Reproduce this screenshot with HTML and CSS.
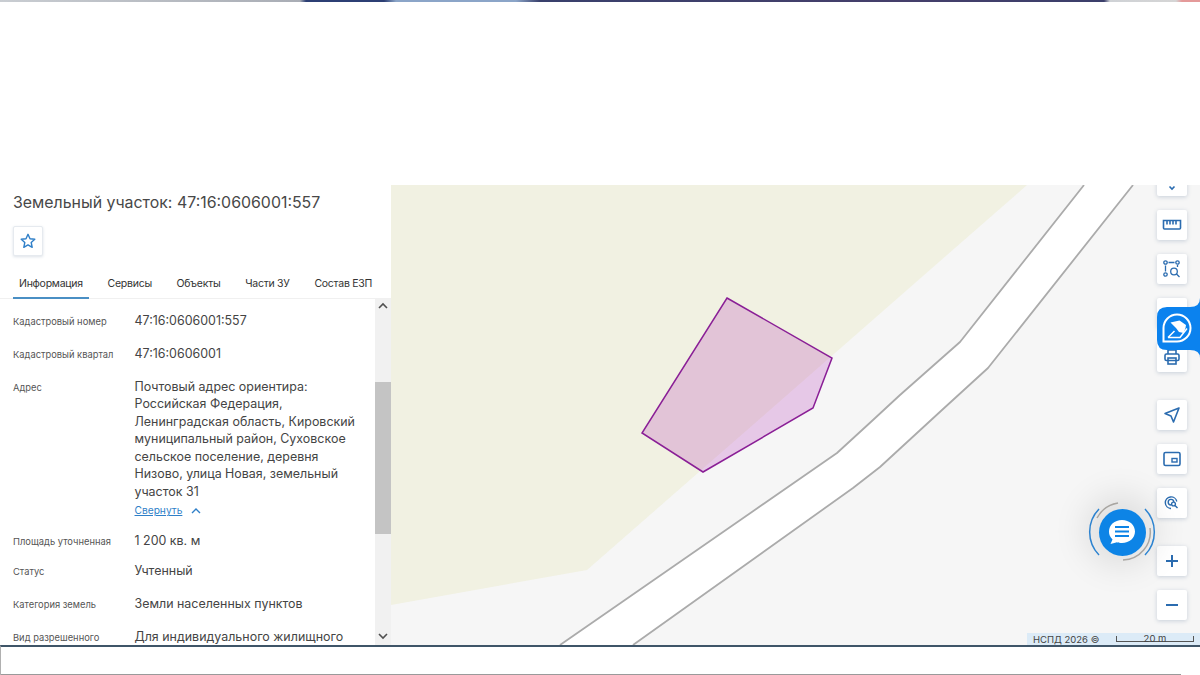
FILE: index.html
```html
<!DOCTYPE html>
<html lang="ru">
<head>
    <meta charset="UTF-8">
    <title>Земельный участок: 47:16:0606001:557</title>
    <link rel="stylesheet" href="styles.css">
</head>
<body>
    <div class="top-strip"></div>
    <div class="top-space"></div>

    <main class="workspace">
        <aside class="panel">
            <h1 class="panel-title">Земельный участок: 47:16:0606001:557</h1>
            <button class="star-button">
                <svg width="16" height="16" viewBox="0 0 16 16"><path d="M8 1.300l2 4.500 4.800.5-3.600 3.200 1 4.800L8 11.900l-4.200 2.400 1-4.800L1.200 6.300 6 5.800z" fill="none" stroke="#2f7fc8" stroke-width="1.400" stroke-linejoin="round"/></svg>
            </button>
            <nav class="tabs">
                <a class="tab tab-active">Информация</a>
                <a class="tab">Сервисы</a>
                <a class="tab">Объекты</a>
                <a class="tab">Части ЗУ</a>
                <a class="tab">Состав ЕЗП</a>
            </nav>
            <div class="panel-body">
                <div class="info-list">
                    <div class="info-row">
                        <div class="info-label">Кадастровый номер</div>
                        <div class="info-value">47:16:0606001:557</div>
                    </div>
                    <div class="info-row">
                        <div class="info-label">Кадастровый квартал</div>
                        <div class="info-value">47:16:0606001</div>
                    </div>
                    <div class="info-row info-row-address">
                        <div class="info-label">Адрес</div>
                        <div class="info-value">
                            Почтовый адрес ориентира:<br>Российская Федерация,<br>Ленинградская область, Кировский<br>муниципальный район, Суховское<br>сельское поселение, деревня<br>Низово, улица Новая, земельный<br>участок 31
                            <a class="collapse-link"><span>Свернуть</span>
                                <svg width="10" height="6" viewBox="0 0 10 6"><path d="M1 5l4-4 4 4" fill="none" stroke="#2f7fc8" stroke-width="1.400"/></svg>
                            </a>
                        </div>
                    </div>
                    <div class="info-row info-row-short">
                        <div class="info-label">Площадь уточненная</div>
                        <div class="info-value">1 200 кв. м</div>
                    </div>
                    <div class="info-row info-row-status">
                        <div class="info-label">Статус</div>
                        <div class="info-value">Учтенный</div>
                    </div>
                    <div class="info-row">
                        <div class="info-label">Категория земель</div>
                        <div class="info-value">Земли населенных пунктов</div>
                    </div>
                    <div class="info-row">
                        <div class="info-label">Вид разрешенного</div>
                        <div class="info-value">Для индивидуального жилищного</div>
                    </div>
                </div>
                <div class="scrollbar">
                    <svg class="scroll-arrow" width="16" height="14" viewBox="0 0 16 14"><path d="M4 9l4-4 4 4" fill="none" stroke="#505050" stroke-width="1.600"/></svg>
                    <div class="scroll-thumb"></div>
                    <svg class="scroll-arrow scroll-arrow-down" width="16" height="14" viewBox="0 0 16 14"><path d="M4 5l4 4 4-4" fill="none" stroke="#505050" stroke-width="1.600"/></svg>
                </div>
            </div>
        </aside>

        <section class="map">
            <svg class="map-canvas" viewBox="391 185 809 460" width="809" height="460">
                <polygon class="land" points="391,185 1027,185 587,570 391,605"/>
                <polygon class="road" points="1084,185 960,342 900,395 873,420 837,453 560,645 633,645 853,488 880,467 942,410 988,368 1133,185"/>
                <polyline class="road-edge" points="1084,185 960,342 900,395 873,420 837,453 560,645"/>
                <polyline class="road-edge" points="1133,185 988,368 942,410 880,467 853,488 633,645"/>
                <polygon class="parcel" points="727,298 832,358 813,408 703,472 642,433"/>
            </svg>

            <div class="map-tools">
                <button class="tool-button"><svg width="20" height="20" viewBox="0 0 20 20"><path d="M7.500 15.500l2.500 2.500 2.500-2.500" fill="none" stroke="#2b6cb0" stroke-width="1.600"/></svg></button>
                <button class="tool-button"><svg width="20" height="20" viewBox="0 0 20 20"><path d="M1.500 5.500h17v7.500a1 1 0 0 1-1 1h-15a1 1 0 0 1-1-1zM5 6v3.500M8 6v3.500M11 6v3.500M14 6v3.500" fill="none" stroke="#2b6cb0" stroke-width="1.600"/></svg></button>
                <button class="tool-button"><svg width="20" height="20" viewBox="0 0 20 20"><g fill="none" stroke="#2b6cb0" stroke-width="1.300"><circle cx="3.500" cy="3.500" r="1.700"/><circle cx="15.500" cy="3.500" r="1.700"/><circle cx="3.500" cy="15.500" r="1.700"/><circle cx="12" cy="12.500" r="3.300"/><path d="M6.500 3.500h6M3.500 6.500v6M15.500 6v2M14.500 15l3 3"/></g></svg></button>
                <button class="tool-button"></button>
                <button class="tool-button"><svg width="20" height="20" viewBox="0 0 20 20"><g fill="none" stroke="#2b6cb0" stroke-width="1.600"><path d="M6 7V3h8v4"/><rect x="3" y="7" width="14" height="6.500" rx="1.500"/><rect x="6" y="11" width="8" height="6"/></g></svg></button>
                <button class="tool-button tool-group-start"><svg width="20" height="20" viewBox="0 0 20 20"><path d="M17 3L3 8.500l6 2.500 2.500 6z" fill="none" stroke="#2b6cb0" stroke-width="1.600" stroke-linejoin="round"/></svg></button>
                <button class="tool-button"><svg width="20" height="20" viewBox="0 0 20 20"><rect x="2" y="3.500" width="16" height="13" rx="1.500" fill="none" stroke="#2b6cb0" stroke-width="1.600"/><rect x="10" y="9.500" width="5" height="3.500" fill="none" stroke="#2b6cb0" stroke-width="1.400"/></svg></button>
                <button class="tool-button"><svg width="20" height="20" viewBox="0 0 20 20"><g fill="none" stroke="#2b6cb0" stroke-width="1.400"><path d="M9 15.500A5.800 5.800 0 1 1 14.800 8.500"/><path d="M9 12a2.800 2.800 0 1 1 2.800-3"/><circle cx="11.500" cy="11" r="1.900"/><path d="M13 12.500l2.500 2.500"/></g></svg></button>
                <button class="tool-button tool-group-start"><svg width="20" height="20" viewBox="0 0 20 20"><path d="M10 4v12M4 10h12" stroke="#2b6cb0" stroke-width="2"/></svg></button>
                <button class="tool-button"><svg width="20" height="20" viewBox="0 0 20 20"><path d="M4 10h12" stroke="#2b6cb0" stroke-width="2"/></svg></button>
            </div>

            <svg class="service-tab" width="43" height="60" viewBox="0 0 43 60">
                <path d="M43 0Q43 9 33 9H10Q0 9 0 19V42Q0 52 10 52H33Q43 52 43 60Z" fill="#0b82ee"/>
                <path d="M20 16.500a13.500 13.500 0 1 1 0 27H6.500V30A13.500 13.500 0 0 1 20 16.500Z" fill="none" stroke="#fff" stroke-width="2"/>
                <path d="M13.500 24.500l9-2 6.500 4.500-.5 3-2 5-4.500-1-3-4z" fill="#fff"/>
                <path d="M11 39.500l6.500-6.500M11 39.500h12l7-9" fill="none" stroke="#fff" stroke-width="1.500"/>
            </svg>

            <div class="chat-widget">
                <svg class="chat-rings" width="80" height="80" viewBox="0 0 80 80">
                    <path d="M17 63A33 33 0 0 1 17 17M63 17A33 33 0 0 1 63 63" fill="none" stroke="#2f8adb" stroke-width="1.500"/>
                    <path d="M15 26A29 29 0 0 1 36 11M41 68A28 28 0 0 0 68 36" fill="none" stroke="#b3b0ac" stroke-width="1.500"/>
                </svg>
                <div class="chat-button">
                    <svg width="30" height="30" viewBox="0 0 30 30">
                        <path d="M15 3c7.500 0 13 5 13 11.500S22.500 26 15 26c-2 0-3.500-.2-5-.8L3.500 27l2-4.500C3 20 2 17.500 2 14.500 2 8 7.500 3 15 3z" fill="#fff"/>
                        <path d="M8 10h14M8 14.500h14M8 19h14" stroke="#0d84e6" stroke-width="2"/>
                    </svg>
                </div>
            </div>

            <div class="attribution">
                <span>НСПД 2026 ©</span>
                <div class="scale-bar">20 m</div>
            </div>
        </section>
    </main>

    <div class="bottom-strip"></div>
</body>
</html>
```

FILE: styles.css
```css
html, body {
    margin: 0;
    height: 675px;
    overflow: hidden;
}

body {
    font-family: Inter, 'Liberation Sans', sans-serif;
    color: #3f3f3f;
    background-color: #fff;
    display: flex;
    flex-direction: column;
}

.top-strip {
    height: 2px;
    background: linear-gradient(90deg, #c9cdd2 0, #a9adb5 25%, #2c3f74 25.500%, #2c3f74 32%, #8ba5c8 33%, #8ba5c8 43%, #39406c 45%, #453f6b 75%, #3b3f6b 92%, #cfd2d6 92.500%, #d5d5d5 98%, #e49a9a 98.500%);
}

.top-space {
    height: 183px;
}

.workspace {
    display: flex;
    height: 460px;
}

/* Left panel */
.panel {
    width: 391px;
    flex: none;
    display: flex;
    flex-direction: column;
    background-color: #fff;
}

.panel-title {
    margin: 8px 0 0 13px;
    font-size: 15.900px;
    line-height: 20px;
    font-weight: 400;
    color: #484848;
}

.star-button {
    width: 30px;
    height: 30px;
    margin: 13px 0 0 13px;
    padding: 0;
    display: flex;
    align-items: center;
    justify-content: center;
    background-color: #fff;
    border: 1px solid #e6eaef;
    border-radius: 2px;
    box-shadow: 0 1px 3px rgba(60, 90, 130, 0.18);
}

.tabs {
    display: flex;
    gap: 12.700px;
    height: 43px;
    padding-left: 13px;
    box-sizing: border-box;
    border-bottom: 1px solid #f0f0f0;
}

.tab {
    padding: 21px 6px 0;
    font-size: 10.500px;
    letter-spacing: -0.250px;
    line-height: 14px;
    color: #333;
    white-space: nowrap;
}

.tab-active {
    border-bottom: 2px solid #4a8fc4;
    height: 43px;
    box-sizing: border-box;
}

.panel-body {
    flex: 1;
    display: flex;
    min-height: 0;
}

.info-list {
    flex: 1;
    padding: 12.500px 0 0 13px;
    overflow: hidden;
}

.info-row {
    display: grid;
    grid-template-columns: 121.500px 1fr;
    padding-bottom: 15.500px;
}

.info-row-address {
    padding-bottom: 12px;
}

.info-row-short {
    padding-bottom: 12.500px;
}

.info-row-status {
    padding-bottom: 15.500px;
}

.info-label {
    padding-top: 2px;
    font-size: 9.350px;
    line-height: 15.500px;
    color: #555;
    white-space: nowrap;
}

.info-value {
    font-size: 12.450px;
    line-height: 17.500px;
    color: #444;
}

.collapse-link {
    display: flex;
    align-items: center;
    gap: 9px;
    height: 18px;
    margin-top: 2px;
    font-size: 10.200px;
    color: #2f7fc8;
}

.collapse-link span {
    text-decoration: underline;
}

.scrollbar {
    width: 16px;
    flex: none;
    display: flex;
    flex-direction: column;
    background-color: #f1f1f1;
}

.scroll-arrow {
    flex: none;
}

.scroll-arrow-down {
    margin-top: auto;
    margin-bottom: 2px;
}

.scroll-thumb {
    height: 152px;
    margin-top: 69px;
    background-color: #c4c4c4;
}

/* Map */
.map {
    position: relative;
    flex: 1;
    overflow: hidden;
    background-color: #f6f6f6;
}

.map-canvas {
    display: block;
}

.land {
    fill: #f1f1e2;
}

.road {
    fill: #fff;
}

.road-edge {
    fill: none;
    stroke: #ababab;
    stroke-width: 1.800;
    stroke-linejoin: round;
    filter: blur(0.4px);
}

.parcel {
    fill: rgba(171, 21, 175, 0.2);
    stroke: #8a1f96;
    stroke-width: 1.500;
}

.map-tools {
    position: absolute;
    top: -19px;
    right: 13px;
    display: flex;
    flex-direction: column;
    gap: 14px;
}

.tool-button {
    width: 30px;
    height: 30px;
    padding: 0;
    display: flex;
    align-items: center;
    justify-content: center;
    background-color: #fff;
    border: none;
    border-radius: 2px;
    box-shadow: 0 1px 4px rgba(60, 90, 130, 0.25);
}

.tool-group-start {
    margin-top: 14px;
}

.service-tab {
    position: absolute;
    top: 113px;
    right: 0;
}

.chat-widget {
    position: absolute;
    top: 307px;
    left: 691px;
    width: 80px;
    height: 80px;
    display: flex;
    align-items: center;
    justify-content: center;
}

.chat-rings {
    position: absolute;
    top: 0;
    left: 0;
}

.chat-button {
    position: relative;
    width: 47px;
    height: 47px;
    display: flex;
    align-items: center;
    justify-content: center;
    border-radius: 50%;
    background-color: #0d84e6;
    box-shadow: -2px -2px 34px 12px rgba(0, 0, 0, 0.1);
}

.attribution {
    position: absolute;
    right: 0;
    bottom: 0;
    width: 173px;
    height: 12px;
    display: flex;
    align-items: center;
    box-sizing: border-box;
    padding-left: 6px;
    background-color: #dcebf7;
    font-size: 9.500px;
    color: #444;
}

.scale-bar {
    position: absolute;
    left: 89px;
    bottom: 3px;
    width: 76px;
    height: 5px;
    border: 1px solid #555;
    border-top: none;
    text-align: center;
    line-height: 6px;
    font-size: 9.500px;
}

.bottom-strip {
    height: 30px;
    box-sizing: border-box;
    border-top: 2px solid #3f5568;
    border-left: 1px solid #b0b0b0;
    background: linear-gradient(#9a9a9a, #9a9a9a) no-repeat left bottom / 1180px 1px #fff;
}
```
